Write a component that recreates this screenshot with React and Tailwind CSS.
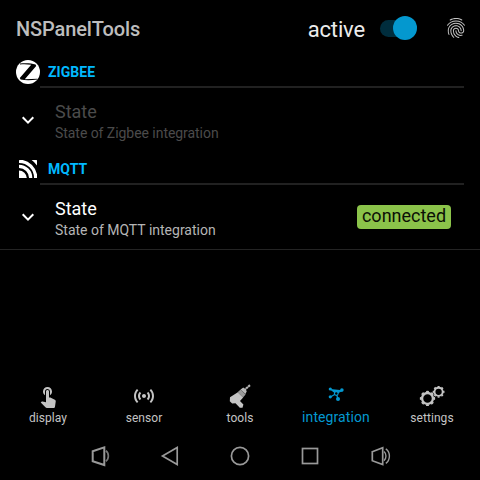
import React from "react";
import { MdFingerprint, MdTouchApp, MdSensors } from "react-icons/md";

const ZigbeeIcon = () => (
  <svg width="24" height="24" viewBox="0 0 24 24">
    <circle cx="12" cy="12" r="12" fill="#fff" />
    <path d="M4 3.6C9 2.9 15 3.1 19.6 4.4L20.2 6L8.8 19.2L21.5 18.8V19.6C15 20.5 9 20.5 4.6 19.6L3.8 18L15.2 4.7C11 4 7 4 4 4.4Z" fill="#000" />
  </svg>
);

const MqttIcon = () => (
  <svg width="24" height="24" viewBox="0 0 24 24">
    <clipPath id="mq"><rect x="3" y="3" width="18" height="18" rx="0.5" /></clipPath>
    <g clipPath="url(#mq)">
      <path d="M3 13.5A8 8 0 0 1 10.8 21H3Z" fill="#fff" />
      <path d="M3 9.3A11.7 11.7 0 0 1 14.7 21M3 4.3A16.7 16.7 0 0 1 19.7 21" stroke="#fff" strokeWidth="3.3" fill="none" />
      <path d="M15.6 3H21V8.4A23 23 0 0 0 15.6 3Z" fill="#fff" />
    </g>
  </svg>
);

const DrillIcon = () => (
  <svg width="24" height="24" viewBox="0 0 24 24" fill="#c4c4c4">
    <path d="M2 13.3L9.8 8.2L15.2 13.6L12 17L15.4 20.5L14.5 23.8H11.8L7.5 19.2L4.2 19.4L1.8 17.3Z" />
    <path d="M9.6 8.2L12.6 5.4L17.6 10.4L15 13.6Z" fill="#9a9a9a" />
    <path d="M12.6 5.6L15.3 3.6L18.8 7.1L17.5 10Z" fill="#bbb" />
    <path d="M16 6.4L22.2 .9" stroke="#b4b4b4" strokeWidth="2.1" strokeDasharray="2.4 .4" />
  </svg>
);

const NodesIcon = () => (
  <svg width="24" height="24" viewBox="0 0 24 24" fill="#0498cf" stroke="#0498cf">
    <path d="M6.3 5L12.3 9.5L18.5 6.3M12.3 9.5L6 13.3M12.3 9.5L14 15" strokeWidth="1.2" />
    <g stroke="none">
      <circle cx="6.3" cy="5" r="1.6" />
      <circle cx="17.9" cy="6.1" r="1.8" />
      <circle cx="6.3" cy="12.8" r="1.6" />
      <circle cx="14" cy="15" r="2" />
      <circle cx="12.3" cy="9.5" r="2.4" />
    </g>
    <circle cx="12.3" cy="9.5" r="1.2" fill="#000" stroke="none" />
  </svg>
);

const GearsIcon = () => (
  <svg width="26" height="24" viewBox="0 0 26 24" fill="none" stroke="#c4c4c4">
    <circle cx="8.5" cy="14.4" r="5.4" strokeWidth="2.3" />
    <circle cx="8.5" cy="14.4" r="6.8" strokeWidth="1.7" pathLength="80" strokeDasharray="5.2 4.8" strokeDashoffset="2.6" />
    <circle cx="19.6" cy="7.8" r="4.1" strokeWidth="1.9" />
    <circle cx="19.6" cy="7.8" r="5.2" strokeWidth="1.4" pathLength="80" strokeDasharray="5.2 4.8" strokeDashoffset="2.6" />
  </svg>
);

const Section = ({ icon, name }) => (
  <div className="flex h-7 pl-4 pr-4">
    <div className="h-6 w-6 shrink-0">{icon}</div>
    <div className="h-7 flex-1 border-b-2 border-[#212121] pl-2 text-[14px] font-bold leading-[25px] tracking-[0.05px] text-[#00b9ff]">{name}</div>
  </div>
);

const StateRow = ({ subtitle, disabled, badge }) => (
  <div className="flex h-[69px] items-start pl-4 pr-[29px] pt-[14px]">
    <svg width="24" height="24" viewBox="0 0 24 24" className="mt-[6px] shrink-0" fill="none" stroke="#fff" strokeWidth="2">
      <path d="M6.7 9.3L12 14.6L17.3 9.3" />
    </svg>
    <div className={disabled ? "-mt-[1px] ml-[15px] flex-1 text-[#4b4b4b]" : "-mt-[1px] ml-[15px] flex-1 text-white"}>
      <div className="text-[18px] leading-[21px]">State</div>
      <div className={disabled ? "mt-[1px] text-[14px] leading-[21px] tracking-[-0.05px]" : "mt-[1px] text-[14px] leading-[21px] text-[#b5b5b5]"}>{subtitle}</div>
    </div>
    {badge && <div className="mt-[6px] flex h-6 w-[94px] items-center justify-center rounded bg-[#8bc34a] text-[18px] leading-6 text-[#0b1005]"><span className="-mt-[3px]">{badge}</span></div>}
  </div>
);

const Tab = ({ icon, label, active }) => (
  <div className={active ? "flex w-24 flex-col items-center text-[#0498cf]" : "flex w-24 flex-col items-center text-[#c4c4c4]"}>
    <div className="flex h-6 justify-center">{icon}</div>
    <div className={active ? "mt-[1px] text-[14px] leading-[17px] tracking-[0.1px]" : "mt-[2px] text-[12px] leading-4 tracking-[0.05px]"}>{label}</div>
  </div>
);

const navShapes = [
  <><path d="M5.7 8.2L17.3 4.3V22L5.7 18.2Z" strokeWidth="2" /><path d="M18.8 7.8C22.2 10 22.2 16 18.8 18.2" stroke="#777" /></>,
  <path d="M20.2 4.5V21.5L5.5 13Z" />,
  <circle cx="13" cy="13" r="8.6" />,
  <rect x="5.5" y="5.5" width="15" height="15" />,
  <><path d="M5.3 8.7L15.7 4.8V21.5L5.3 17.7Z" /><path d="M17 8.5C19.6 10.5 19.6 15.7 17 17.7M18.8 5.8C23.6 9 23.6 17.2 18.8 20.4" strokeWidth="1.4" /></>,
];

export default function App() {
  return (
    <div className="flex h-[480px] w-[480px] flex-col overflow-hidden bg-black font-['Roboto',sans-serif]">
      <header className="flex h-[60px] items-start pl-4 pr-3">
        <h1 className="mt-[17px] text-[20px] font-medium leading-6 tracking-[-0.12px] text-[#bdbdbd]">NSPanelTools</h1>
        <div className="ml-auto mt-4 text-[22px] leading-7 tracking-[-0.15px] text-[#ececec]">active</div>
        <div className="ml-[15px] mt-4 flex h-6 w-[37px] items-center justify-end">
          <div className="flex h-[17px] w-full items-center justify-end rounded-full bg-[#002d3d]">
            <div className="h-6 w-6 shrink-0 rounded-full bg-[#0498cf]" />
          </div>
        </div>
        <MdFingerprint size={24} color="#c4c4c4" className="ml-[27px] mt-4" />
      </header>
      <Section icon={<ZigbeeIcon />} name="ZIGBEE" />
      <StateRow subtitle="State of Zigbee integration" disabled />
      <Section icon={<MqttIcon />} name="MQTT" />
      <div className="h-[65px] border-b border-[#242424]">
        <StateRow subtitle="State of MQTT integration" badge="connected" />
      </div>
      <nav className="mt-auto flex h-[60px]">
        <Tab icon={<MdTouchApp size={24} />} label="display" />
        <Tab icon={<MdSensors size={24} />} label="sensor" />
        <Tab icon={<DrillIcon />} label="tools" />
        <Tab icon={<NodesIcon />} label="integration" active />
        <Tab icon={<GearsIcon />} label="settings" />
      </nav>
      <div className="flex h-9 items-start justify-center gap-11">
        {navShapes.map((s, i) => (
          <svg key={i} width="26" height="26" viewBox="0 0 26 26" fill="none" stroke="#999" strokeWidth="1.7" className="-mt-[1px]">{s}</svg>
        ))}
      </div>
    </div>
  );
}
